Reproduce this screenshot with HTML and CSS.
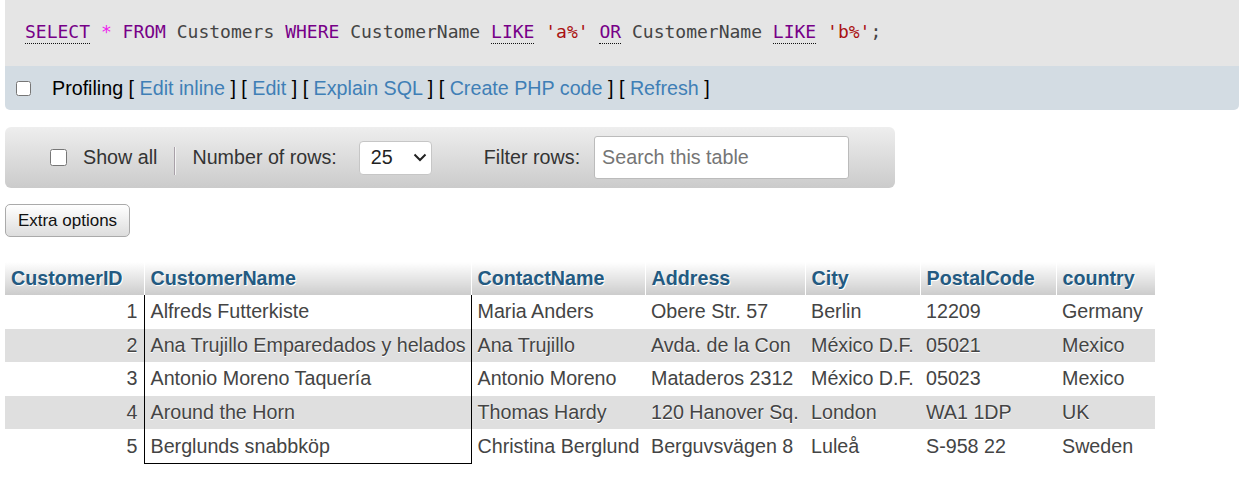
FILE: index.html
```html
<!DOCTYPE html>
<html lang="en">
<head>
<meta charset="utf-8">
<title>SQL result</title>
<link rel="stylesheet" href="styles.css">
</head>
<body>
<div class="page">
  <div class="sql"><code><span class="kw doc">SELECT</span> <span class="op">*</span> <span class="kw">FROM</span> Customers <span class="kw">WHERE</span> CustomerName <span class="kw doc">LIKE</span> <span class="str">'a%'</span> <span class="kw doc">OR</span> CustomerName <span class="kw doc">LIKE</span> <span class="str">'b%'</span>;</code></div>

  <div class="profiling">
    <input type="checkbox" class="chk chk-prof">
    <span class="prof-text">Profiling [ <a href="#">Edit inline</a> ] [ <a href="#">Edit</a> ] [ <a href="#">Explain SQL</a> ] [ <a href="#">Create PHP code</a> ] [ <a href="#">Refresh</a> ]</span>
  </div>

  <div class="controls">
    <input type="checkbox" class="chk chk-show">
    <span class="label">Show all</span>
    <span class="sep"></span>
    <span class="label">Number of rows:</span>
    <div class="rows-select">
      <span>25</span>
      <svg class="chev" width="14" height="9" viewBox="0 0 14 9"><path d="M1.5 1.5 L7 7 L12.5 1.5" fill="none" stroke="#222" stroke-width="2"/></svg>
    </div>
    <span class="label filter-label">Filter rows:</span>
    <input type="text" class="search" placeholder="Search this table">
  </div>

  <button class="extra" type="button">Extra options</button>

  <table class="data">
    <colgroup>
      <col class="w-id"><col class="w-name"><col class="w-contact"><col class="w-addr"><col class="w-city"><col class="w-postal"><col class="w-country">
    </colgroup>
    <thead>
      <tr><th>CustomerID</th><th>CustomerName</th><th>ContactName</th><th>Address</th><th>City</th><th>PostalCode</th><th>country</th></tr>
    </thead>
    <tbody>
      <tr><td class="num">1</td><td>Alfreds Futterkiste</td><td>Maria Anders</td><td>Obere Str. 57</td><td>Berlin</td><td>12209</td><td>Germany</td></tr>
      <tr><td class="num">2</td><td>Ana Trujillo Emparedados y helados</td><td>Ana Trujillo</td><td>Avda. de la Con</td><td>México D.F.</td><td>05021</td><td>Mexico</td></tr>
      <tr><td class="num">3</td><td>Antonio Moreno Taquería</td><td>Antonio Moreno</td><td>Mataderos 2312</td><td>México D.F.</td><td>05023</td><td>Mexico</td></tr>
      <tr><td class="num">4</td><td>Around the Horn</td><td>Thomas Hardy</td><td>120 Hanover Sq.</td><td>London</td><td>WA1 1DP</td><td>UK</td></tr>
      <tr><td class="num">5</td><td>Berglunds snabbköp</td><td>Christina Berglund</td><td>Berguvsvägen 8</td><td>Luleå</td><td>S-958 22</td><td>Sweden</td></tr>
    </tbody>
  </table>
</div>
</body>
</html>
```

FILE: styles.css
```css
body {
  margin: 0;
  background: #fff;
  color: #333;
  font-family: "Liberation Sans", Arial, sans-serif;
}

.page {
  padding-left: 5px;
}

/* SQL query box */
.sql {
  background: #e5e5e5;
  height: 66px;
  box-sizing: border-box;
  padding: 21px 0 0 20px;
  font-family: "DejaVu Sans Mono", "Liberation Mono", monospace;
  font-size: 18px;
  line-height: 22px;
  color: #444;
  white-space: pre;
}
.sql code { font-family: inherit; }
.kw { color: #770088; }
.doc { border-bottom: 1px dotted #111; padding-bottom: 1px; }
.op { color: #ee22ee; }
.str { color: #aa1111; }

/* Profiling bar */
.profiling {
  background: #d3dce3;
  height: 44px;
  display: flex;
  align-items: center;
  padding-left: 11px;
  border-radius: 0 0 5px 5px;
  font-size: 19.7px;
  color: #000;
}
.chk { margin: 0; }
.chk-prof { width: 15px; height: 15px; margin-right: 21px; }
a { color: #3f7fb6; text-decoration: none; }

/* Controls */
.controls {
  margin-top: 17px;
  width: 890px;
  height: 61px;
  box-sizing: border-box;
  border-radius: 6px;
  background: linear-gradient(#eeeeee, #cbcbcb);
  display: flex;
  align-items: center;
  padding-left: 45px;
  font-size: 19.7px;
  color: #333;
}
.chk-show { width: 17px; height: 17px; margin-right: 16px; }
.sep {
  width: 0;
  height: 28px;
  border-left: 1px solid #a8a0a8;
  border-right: 1px solid #f4f4f4;
  margin: 6px 16px 0 17px;
}
.rows-select {
  margin-left: 22px;
  width: 73px;
  height: 34px;
  box-sizing: border-box;
  border: 1px solid #c6c6c6;
  border-radius: 4px;
  background: #fff;
  display: flex;
  align-items: center;
  justify-content: space-between;
  padding: 0 4px 0 11px;
  color: #222;
}
.filter-label { margin-left: 52px; }
.search {
  margin-left: 14px;
  width: 255px;
  height: 43px;
  box-sizing: border-box;
  border: 1px solid #bbb;
  border-radius: 3px;
  padding: 0 7px;
  font-family: inherit;
  font-size: 19.7px;
  color: #333;
  background: #fff;
}
.search::placeholder { color: #757575; }

/* Extra options button */
.extra {
  display: block;
  margin-top: 16px;
  width: 125px;
  height: 33px;
  padding: 0;
  font-family: inherit;
  font-size: 17px;
  color: #111;
  border: 1px solid #aaa;
  border-radius: 5px;
  background: linear-gradient(#ffffff, #dddddd);
}

/* Data table */
.data {
  margin-top: 25px;
  border-collapse: collapse;
  table-layout: fixed;
  width: 1150px;
  font-size: 19.7px;
}
.w-id { width: 139px; }
.w-name { width: 327px; }
.w-contact { width: 174px; }
.w-addr { width: 160px; }
.w-city { width: 115px; }
.w-postal { width: 136px; }
.w-country { width: 99px; }

.data th {
  height: 33px;
  padding: 0 6px;
  text-align: left;
  color: #235a81;
  font-weight: bold;
  background: linear-gradient(#ffffff, #cccccc);
  border-right: 1px solid #fff;
  text-shadow: 1px 1px 0 #fff;
  white-space: nowrap;
}
.data th:last-child { border-right: none; }
.data td {
  height: 33.6px;
  padding: 0 6px;
  color: #444;
  text-shadow: 0 1px 0 #fff;
  white-space: nowrap;
  overflow: hidden;
  background: #fff;
}
.data tbody tr:nth-child(even) td { background: #dfdfdf; }
.data td.num { text-align: right; padding-right: 6px; }
.data td:nth-child(2) {
  border-left: 1px solid #000;
  border-right: 1px solid #000;
}
.data tbody tr:last-child td:nth-child(2) { border-bottom: 1px solid #000; }
```
